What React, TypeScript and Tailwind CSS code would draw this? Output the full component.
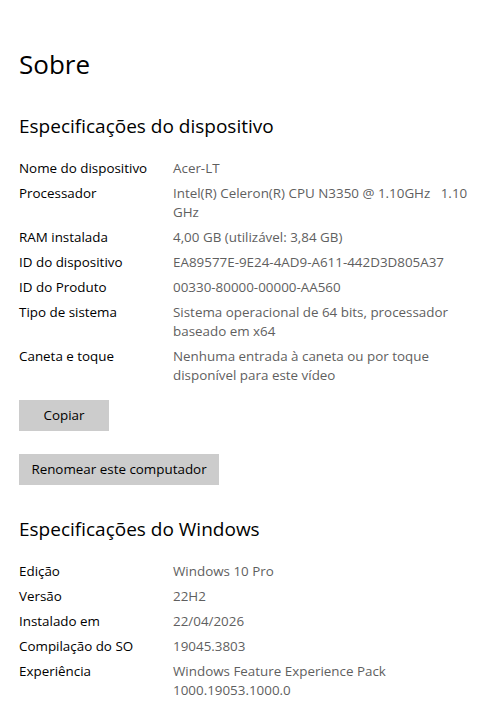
const device: [string, string[]][] = [
  ["Nome do dispositivo", ["Acer-LT"]],
  ["Processador", ["Intel(R) Celeron(R) CPU N3350 @ 1.10GHz\u00a0\u00a0\u00a01.10", "GHz"]],
  ["RAM instalada", ["4,00 GB (utilizável: 3,84 GB)"]],
  ["ID do dispositivo", ["EA89577E-9E24-4AD9-A611-442D3D805A37"]],
  ["ID do Produto", ["00330-80000-00000-AA560"]],
  ["Tipo de sistema", ["Sistema operacional de 64 bits, processador", "baseado em x64"]],
  ["Caneta e toque", ["Nenhuma entrada à caneta ou por toque", "disponível para este vídeo"]],
];

const windows: [string, string[]][] = [
  ["Edição", ["Windows 10 Pro"]],
  ["Versão", ["22H2"]],
  ["Instalado em", ["22/04/2026"]],
  ["Compilação do SO", ["19045.3803"]],
  ["Experiência", ["Windows Feature Experience Pack", "1000.19053.1000.0"]],
];

function Specs({ rows }: { rows: [string, string[]][] }) {
  return (
    <div className="flex flex-col gap-[6px]">
      {rows.map(([k, lines]) => (
        <div key={k} className="flex text-[13.4px] leading-[19px]">
          <div className="w-[154px] shrink-0 text-black">{k}</div>
          <div className="whitespace-nowrap text-[#5f5f5f]">
            {lines.map((l) => (
              <div key={l}>{l}</div>
            ))}
          </div>
        </div>
      ))}
    </div>
  );
}

export default function App() {
  return (
    <div
      className="min-h-screen bg-white pl-[19px] pt-[46px] text-black"
      style={{ fontFamily: '"Open Sans", "Noto Sans", sans-serif' }}
    >
      <h1 className="text-[26px] leading-[36px] font-normal">Sobre</h1>
      <h2 className="mt-[30px] text-[19px] leading-[28px]">Especificações do dispositivo</h2>
      <div className="mt-[19px]">
        <Specs rows={device} />
      </div>
      <button className="mt-[15px] block h-[31px] w-[90px] bg-[#cccccc] text-[13.4px]">Copiar</button>
      <button className="mt-[23px] block h-[31px] w-[200px] bg-[#cccccc] text-[13.4px]">
        Renomear este computador
      </button>
      <h2 className="mt-[30px] text-[19px] leading-[28px]">Especificações do Windows</h2>
      <div className="mt-[19px]">
        <Specs rows={windows} />
      </div>
    </div>
  );
}
